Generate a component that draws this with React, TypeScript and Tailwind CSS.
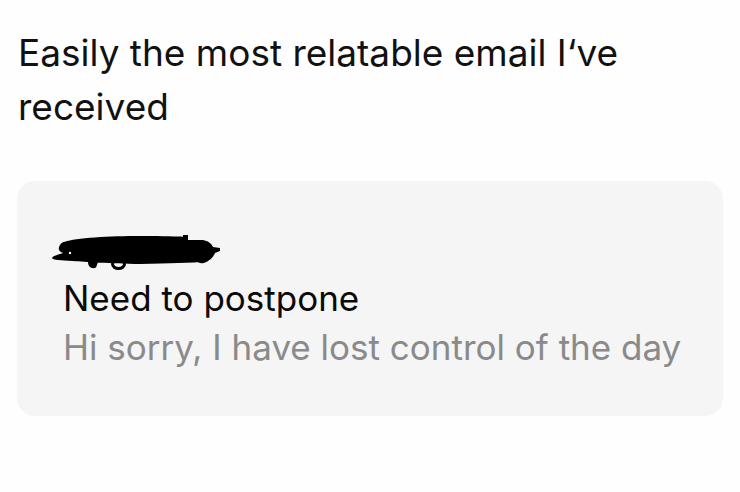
import React from "react";

function Redaction() {
  return (
    <svg width="172" height="40" viewBox="0 0 172 40" className="block">
      <path
        d="M15 9.7 C25 6 60 4 90 4 C115 4 128 4.5 133 4.7 L133 3 L138 3 L138 8 C145 8 150 8 153 8 C158 9 161 11 163 15 L170 16 L170 19 L165 21 C164 23 163 26 157 29.7 C140 30.5 120 31.5 90 32 C60 31.5 35 30 23 29 C10 28.5 3 28 2 26 C3 24 5 23.7 5 23.7 C10 22 13 21 13 21 C8 19 8 16 10 13 C11 11 13 10 15 9.7 Z"
        fill="#000"
      />
      <path d="M38 30 C38 35 42 37.5 46 35.5 L48 30 Z" fill="#000" />
      <ellipse cx="68.5" cy="32" rx="6" ry="4.5" fill="none" stroke="#000" strokeWidth="3" />
      <path d="M146 27 C147 32 155 33 158 28 Z" fill="#000" />
      <circle cx="20" cy="21" r="1.2" fill="#fff" />
    </svg>
  );
}

export default function App() {
  return (
    <div
      className="w-[740px] h-[492px] bg-[#fefefe] overflow-hidden"
      style={{ fontFamily: "Inter, 'Liberation Sans', sans-serif" }}
    >
      <div className="pl-[18px] pt-[26px] text-[37px] leading-[54px] text-[#111]">
        Easily the most relatable email I‘ve
        <br />
        received
      </div>
      <div className="ml-[17px] mt-[47px] w-[706px] h-[235px] rounded-[18px] bg-[#f5f5f5] pl-[46px] pt-[51px]">
        <div className="-ml-[13px]">
          <Redaction />
        </div>
        <div className="mt-[2px] text-[35px] leading-[49px] text-[#0a0a0a]">Need to postpone</div>
        <div className="text-[35px] leading-[49px] text-[#8a8a8a]">Hi sorry, I have lost control of the day</div>
      </div>
    </div>
  );
}
